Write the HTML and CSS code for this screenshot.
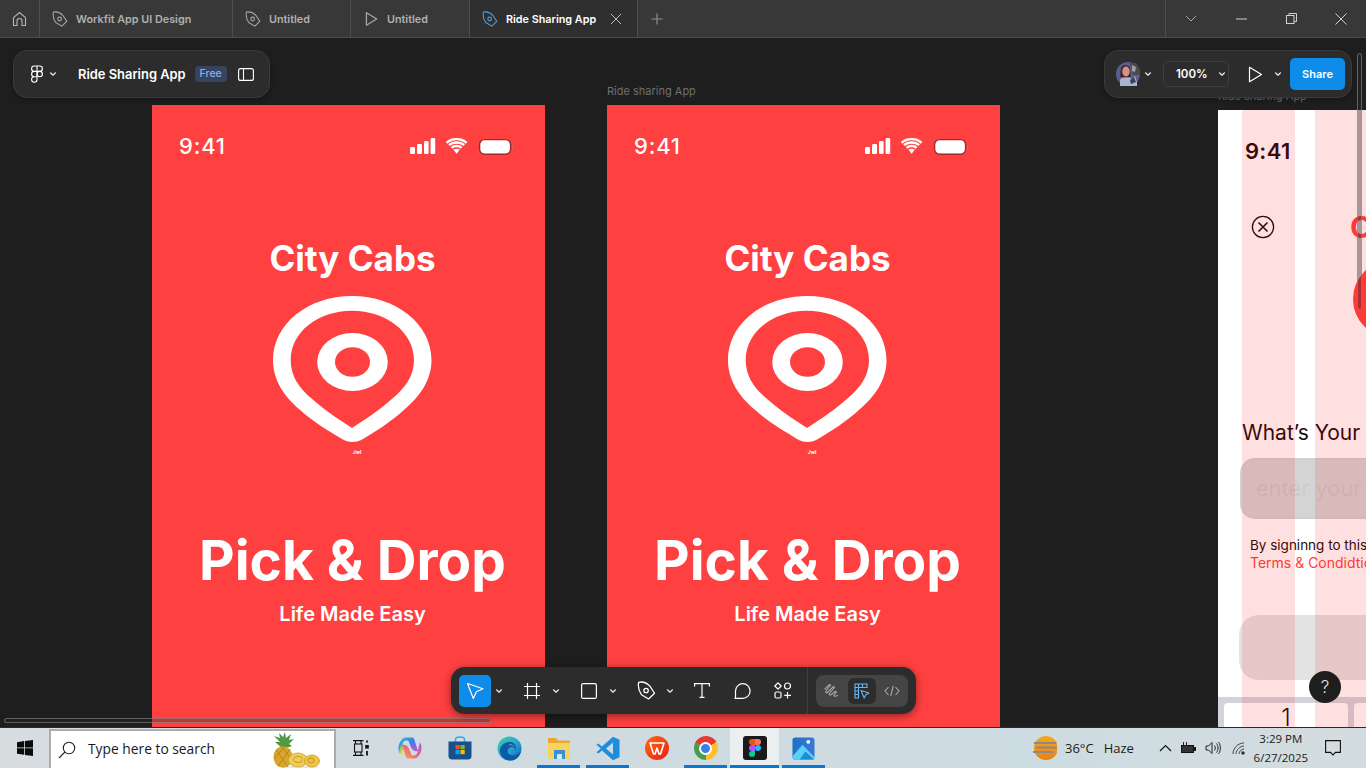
FILE: index.html
```html
<!DOCTYPE html>
<html lang="en">
<head>
<meta charset="utf-8">
<title>Ride Sharing App</title>
<link rel="stylesheet" href="styles.css">
</head>
<body>
<svg class="defs" width="0" height="0" aria-hidden="true">
  <defs>
    <symbol id="pen" viewBox="0 0 18 18"><path d="M1.600 1.200C5.500.4 9.500 2 12.200 4.800L16.600 11.600 11 17 4.200 13C2 9.800.8 5 1.600 1.200Z" fill="none" stroke="currentColor" stroke-width="1.200" stroke-linejoin="round"/><circle cx="8.600" cy="9" r="2.100" fill="none" stroke="currentColor" stroke-width="1.200"/></symbol>
    <symbol id="chev" viewBox="0 0 8 8"><path d="M1.500 2.800 4 5.200 6.500 2.800" fill="none" stroke="currentColor" stroke-width="1.200" stroke-linecap="round" stroke-linejoin="round"/></symbol>
    <symbol id="pin" viewBox="0 0 159 148"><path fill="#fff" fill-rule="evenodd" d="M79 0C35 0 0 28 0 64C0 85 12 101 26 113C40 126 56 135 69 143C75 147 84 147 90 143C103 135 118 126 132 113C146 101 158.500 85 158.500 64C158.500 28 123 0 79 0ZM79 14.700C45 14.700 17.700 36 17.700 64C17.700 80 26 92 38 102C50 113 65 123 79 132C93 123 108 113 120 102C132 92 141 80 141 64C141 36 113 14.700 79 14.700Z"/><ellipse cx="79.500" cy="66" rx="35.300" ry="29" fill="#fff"/><ellipse cx="79.500" cy="66" rx="17.500" ry="14.700" fill="#ff4040"/></symbol>
    <symbol id="status" viewBox="0 0 104 17"><rect x="0" y="9" width="5" height="7" rx="1.200" fill="#fff"/><rect x="7" y="6" width="5" height="10" rx="1.200" fill="#fff"/><rect x="14" y="3" width="4.600" height="13" rx="1.200" fill="#fff"/><rect x="20.600" y="0" width="4.600" height="16" rx="1.200" fill="#fff"/><path d="M37.400 5.400C42.600.7 50.600.7 55.800 5.400L57.200 4C51.200-1.400 42-1.400 36 4Z" fill="#fff" stroke="#fff" stroke-width=".5"/><path d="M40 8.100C43.700 4.900 49.500 4.900 53.200 8.100L55 6.300C50.200 2.100 43 2.100 38.200 6.300Z" fill="#fff"/><path d="M42.600 10.700C44.900 8.900 48.300 8.900 50.600 10.700L52.400 8.900C49 6.100 44.200 6.100 40.800 8.900Z" fill="#fff"/><path d="M46.600 15.800 49.800 11.600C47.900 10.400 45.300 10.400 43.400 11.600Z" fill="#fff"/><rect x="69.600" y="1.600" width="31" height="14.600" rx="5" fill="#fff" stroke="#a2282c" stroke-width="1.400"/><rect x="102" y="6.500" width="1.400" height="5" rx=".6" fill="#d86060"/></symbol>
  </defs>
</svg>

<header class="tabbar">
  <div class="tab home"><svg width="15" height="16" viewBox="0 0 15 16" fill="none" stroke="#b4b4b4" stroke-width="1.100"><path d="M1.500 6.700 7.500 1.500 13.500 6.700V14.500H10V9.800C10 8.300 9 7.500 7.500 7.500S5 8.300 5 9.800V14.500H1.500Z" stroke-linejoin="round"/></svg></div>
  <div class="tab w1"><svg class="tab-ico"><use href="#pen"/></svg><span>Workfit App UI Design</span></div>
  <div class="tab w2"><svg class="tab-ico"><use href="#pen"/></svg><span>Untitled</span></div>
  <div class="tab w3"><svg class="tab-ico" viewBox="0 0 14 14"><path d="M3 1.500 12 7 3 12.500Z" fill="none" stroke="currentColor" stroke-width="1.100" stroke-linejoin="round"/></svg><span>Untitled</span></div>
  <div class="tab w4 active"><svg class="tab-ico"><use href="#pen"/></svg><span>Ride Sharing App</span><svg class="tab-x" width="12" height="12" viewBox="0 0 12 12"><path d="M1 1 11 11M11 1 1 11" stroke="#bdbdbd" stroke-width="1"/></svg></div>
  <div class="tab plus"><svg width="12" height="12" viewBox="0 0 12 12"><path d="M6 .5V11.500M.5 6H11.500" stroke="#8f8f8f" stroke-width="1.200"/></svg></div>
  <div class="tab-fill"></div>
  <div class="winctl">
    <span class="wc"><svg width="12" height="7" viewBox="0 0 12 7"><path d="M1 1 6 6 11 1" fill="none" stroke="#a8a8a8"/></svg></span>
    <span class="wc"><svg width="11" height="2" viewBox="0 0 11 2"><path d="M0 1H11" stroke="#d0d0d0" stroke-width="1"/></svg></span>
    <span class="wc"><svg width="11" height="11" viewBox="0 0 11 11" fill="none" stroke="#d0d0d0"><rect x=".5" y="2.500" width="7.500" height="8"/><path d="M3 2.500V.5H10.500V8.500H8"/></svg></span>
    <span class="wc"><svg width="12" height="12" viewBox="0 0 12 12"><path d="M.5.5 11.500 11.500M11.500.5 .5 11.500" stroke="#d0d0d0"/></svg></span>
  </div>
</header>

<main class="canvas">
  <div class="frame-label lab-a">Ride sharing App</div>
  <div class="frame-label lab-b">Ride sharing App</div>

  <section class="phone red pos-a">
    <div class="status"><span class="time">9:41</span><svg class="status-ico"><use href="#status"/></svg></div>
    <h1 class="brand">City Cabs</h1>
    <svg class="pin"><use href="#pin"/></svg>
    <div class="tiny">Jwl</div>
    <div class="headline">Pick &amp; Drop</div>
    <div class="tagline">Life Made Easy</div>
  </section>

  <section class="phone red pos-b">
    <div class="status"><span class="time">9:41</span><svg class="status-ico"><use href="#status"/></svg></div>
    <h1 class="brand">City Cabs</h1>
    <svg class="pin"><use href="#pin"/></svg>
    <div class="tiny">Jwl</div>
    <div class="headline">Pick &amp; Drop</div>
    <div class="tagline">Life Made Easy</div>
  </section>

  <section class="phone sign pos-c">
    <div class="s-time">9:41</div>
    <div class="s-row">
      <svg class="s-close" width="24" height="24" viewBox="0 0 24 24" fill="none" stroke="#1c0b0b"><circle cx="12" cy="12" r="10.600" stroke-width="1.300"/><path d="M7.500 7.500 16.500 16.500M16.500 7.500 7.500 16.500" stroke-width="1.600"/></svg>
      <span class="s-brand">City Cabs</span>
    </div>
    <div class="s-logo"></div>
    <div class="s-q">What’s Your Name?</div>
    <div class="s-input">enter your name</div>
    <div class="s-terms">By signinng to this app you agree to our<br><span class="s-link">Terms &amp; Condidtions</span></div>
    <div class="s-btn"></div>
    <div class="s-keys"><div class="s-key">1</div><div class="s-key">2</div></div>
  </section>

  <div class="hscroll"></div>
  <div class="vscroll"></div>

  <div class="panel panel-left">
    <svg class="fig-mark" width="12" height="18" viewBox="0 0 12 18" fill="none" stroke="#fff" stroke-width="1.100"><path d="M6 1H3.300a2.700 2.700 0 0 0 0 5.400H6ZM6 1H8.700a2.700 2.700 0 0 1 0 5.400H6ZM6 6.400H3.300a2.700 2.700 0 0 0 0 5.400H6ZM6 11.800H3.300A2.700 2.700 0 1 0 6 14.500Z"/><circle cx="8.700" cy="9.100" r="2.700"/></svg>
    <svg class="chev c-logo"><use href="#chev"/></svg>
    <span class="file-name">Ride Sharing App</span>
    <span class="free">Free</span>
    <svg class="side-ico" width="16" height="13" viewBox="0 0 16 13" fill="none" stroke="#fff" stroke-width="1.100"><rect x=".6" y=".6" width="14.800" height="11.800" rx="2"/><path d="M5.500.6V12.400"/></svg>
  </div>

  <div class="panel panel-right">
    <svg class="avatar" width="24" height="24" viewBox="0 0 24 24"><circle cx="12" cy="12" r="12" fill="#55618a"/><path d="M14 1H20L24 8V13H17Z" fill="#4a4a4c"/><path d="M16 3 20 5 19 10 16 9Z" fill="#a0a0a2"/><path d="M5 6C6 2 13 2 14 6L15 15H4Z" fill="#4c2428"/><ellipse cx="10" cy="9.500" rx="3.700" ry="5" fill="#cf9488"/><path d="M4 24V18C5 15 14 15 16 17L19 14 21 20V24Z" fill="#a9b4d0"/><path d="M14 18 18 15 20 20 15 22Z" fill="#3b4260"/></svg>
    <svg class="chev c-av"><use href="#chev"/></svg>
    <div class="zoom-box"><span>100%</span><svg class="chev"><use href="#chev"/></svg></div>
    <svg class="play" width="15" height="17" viewBox="0 0 15 17"><path d="M1.500 1.300 13.500 8.500 1.500 15.700Z" fill="none" stroke="#fff" stroke-width="1.200" stroke-linejoin="round"/></svg>
    <svg class="chev c-play"><use href="#chev"/></svg>
    <div class="share">Share</div>
  </div>

  <div class="tools">
    <div class="tool select"><svg width="20" height="20" viewBox="0 0 20 20"><path d="M2.500 2.500 18 7.800 11.400 10.700 8.300 17.500Z" fill="none" stroke="#fff" stroke-width="1.200" stroke-linejoin="round"/></svg></div>
    <svg class="chev tc"><use href="#chev"/></svg>
    <div class="tool t-frame"><svg width="16" height="16" viewBox="0 0 16 16"><path d="M3.500 0V16M12.500 0V16M0 3.500H16M0 12.500H16" stroke="#fff" stroke-width="1.200"/></svg></div>
    <svg class="chev tc"><use href="#chev"/></svg>
    <div class="tool t-rect"><svg width="16" height="16" viewBox="0 0 16 16"><rect x=".6" y=".6" width="14.800" height="14.800" rx="1.500" fill="none" stroke="#fff" stroke-width="1.200"/></svg></div>
    <svg class="chev tc"><use href="#chev"/></svg>
    <div class="tool t-pen"><svg class="white-ico" width="19" height="19"><use href="#pen"/></svg></div>
    <svg class="chev tc"><use href="#chev"/></svg>
    <div class="tool t-text"><svg width="16" height="15" viewBox="0 0 16 15"><path d="M.6 3.500V.6H15.400V3.500M8 .6V14.400M5.500 14.400H10.500" fill="none" stroke="#fff" stroke-width="1.200"/></svg></div>
    <div class="tool t-bub"><svg width="17" height="16" viewBox="0 0 17 16"><path d="M8.800.7A7.300 7.300 0 0 1 8.800 15.300H1.200C1.800 13.800 1.500 12.800 1.500 8A7.300 7.300 0 0 1 8.800.7Z" fill="none" stroke="#fff" stroke-width="1.200"/></svg></div>
    <div class="tool t-comp"><svg width="18" height="17" viewBox="0 0 18 17" fill="none" stroke="#fff" stroke-width="1.200"><path d="M4 .8 7.200 4 4 7.200 .8 4Z" stroke-linejoin="round"/><circle cx="13.500" cy="4" r="3"/><rect x="1" y="10" width="6" height="6" rx="1.500"/><path d="M13.500 10V16.500M10.200 13.300H17"/></svg></div>
    <div class="tool-sep"></div>
    <div class="modes">
      <div class="mode"><svg width="15" height="15" viewBox="0 0 15 15" fill="none" stroke="#a8a8a8" stroke-width="1.100" stroke-linecap="round"><path d="M1 6 5 2C6 1 7 2 6 3L2 8C1 9.500 2.500 10.500 3.500 9.500L9 4C10 3 11 4 10 5L5.500 10.500C4.700 11.500 6 12.500 7 11.700L11 8.500C12 7.800 12.800 8.800 12 9.700L10 12C9.300 13 10.500 14 13.500 12.500"/></svg></div>
      <div class="mode on"><svg width="16" height="16" viewBox="0 0 16 16" fill="none" stroke="#6db4f2" stroke-width="1.100"><path d="M1 1H13V4.500H4.500V15H1ZM1 4.500H4.500M1 8H4.500M1 11.500H4.500M4.500 1V4.500M8.500 1V4.500"/><path d="M7 7.500 15 10 11.800 11.800 10.200 15Z" stroke-linejoin="round"/></svg></div>
      <div class="mode"><svg width="16" height="12" viewBox="0 0 16 12" fill="none" stroke="#a8a8a8" stroke-width="1.100"><path d="M4.500 2 1 6 4.500 10M11.500 2 15 6 11.500 10M9.200 1 6.800 11"/></svg></div>
    </div>
  </div>

  <div class="help">?</div>
</main>

<footer class="taskbar">
  <div class="start"><svg width="16" height="16" viewBox="0 0 16 16" fill="#0b0b0b"><path d="M0 2.200 7.200 1.100V7.400H0ZM8 1 16 0V7.400H8ZM0 8.200H7.200V14.700L0 13.700ZM8 8.200H16V16L8 14.900Z"/></svg></div>
  <div class="search">
    <svg class="search-ico" width="18" height="18" viewBox="0 0 18 18" fill="none" stroke="#222" stroke-width="1.100"><circle cx="11" cy="7" r="5.700"/><path d="M7 11 1 17"/></svg>
    <span class="search-text">Type here to search</span>
    <svg class="pine" width="50" height="36" viewBox="0 0 50 36"><ellipse cx="30" cy="35" rx="19" ry="1.200" fill="#e8e8e0"/><path d="M11 16 4 10 9 10 3 4 9 6 8 1 12 5 14 0 15 6 20 2 18 8 23 7 18 12 21 14 15 16Z" fill="#4f9a45"/><ellipse cx="12" cy="25" rx="9.500" ry="10.800" fill="#d8a62c"/><path d="M5 18 17 35M10 14 21 28M19 17 7 34M14 14 3 27" stroke="#a9801f" stroke-width=".8"/><ellipse cx="27" cy="28" rx="9.500" ry="7" fill="#f0cd55" stroke="#cfa032" stroke-width=".8"/><ellipse cx="27" cy="27.500" rx="4.500" ry="3" fill="none" stroke="#c89a2c"/><ellipse cx="41" cy="29" rx="7.500" ry="6" fill="#eec346" stroke="#c99a2c" stroke-width=".8"/><ellipse cx="40" cy="28.500" rx="3" ry="2.500" fill="none" stroke="#c08f28"/></svg>
  </div>
  <div class="app"><svg width="16" height="16" viewBox="0 0 16 16" fill="none" stroke="#111" stroke-width="1.100"><path d="M0 .6H10.500M0 15.400H10.500"/><rect x="1.500" y="4" width="7.500" height="8"/><path d="M2.500 .6V4M8 .6V4M2.500 12V15.400M8 12V15.400"/><path d="M14 .5V2.500M14 11V15.500" stroke-width="1.800"/><rect x="12.200" y="5" width="3.600" height="3.600" fill="#111" stroke="none"/></svg></div>
  <div class="app"><svg width="24" height="22" viewBox="0 0 24 22"><defs><linearGradient id="cp1" x1="0" y1="0" x2="1" y2="1"><stop offset="0" stop-color="#27c8d8"/><stop offset=".45" stop-color="#3f7fe8"/><stop offset="1" stop-color="#d84fd0"/></linearGradient><linearGradient id="cp2" x1="0" y1="1" x2="1" y2="0"><stop offset="0" stop-color="#f8b03a"/><stop offset=".5" stop-color="#f0607e"/><stop offset="1" stop-color="#9a5ff0"/></linearGradient><linearGradient id="cp3" x1="0" y1="0" x2="0" y2="1"><stop offset="0" stop-color="#4fd06a"/><stop offset="1" stop-color="#f0d040"/></linearGradient></defs><path d="M8 .5H14C15.500.5 16 1.500 16.500 3L20 14C16 15 13.500 12 12.500 9L11 5C10.500 3.800 9.800 3.500 8.500 3.500 6 3.500 5 5 4.500 7L3 13C2.500 15 2 17 1.500 16 .2 13.500 0 9 1.500 6 3 2.500 5.500.5 8 .5Z" fill="url(#cp1)"/><path d="M1.500 16C1 13 2.500 8 4.500 7 5.500 9 4 15 4 17 3 18 2 17.500 1.500 16Z" fill="url(#cp3)"/><path d="M16 21.500H10C8.500 21.500 8 20.500 7.500 19L4 8C8 7 10.500 10 11.500 13L13 17C13.500 18.200 14.200 18.500 15.500 18.500 18 18.500 19 17 19.500 15L21 9C21.500 7 22 5 22.500 6 23.800 8.500 24 13 22.500 16 21 19.500 18.500 21.500 16 21.500Z" fill="url(#cp2)"/></svg></div>
  <div class="app nudge"><svg width="24" height="24" viewBox="0 0 24 24"><path d="M7.500 7V3.500C7.500 1.500 8.500 1 12 1S16.500 1.500 16.500 3.500V7" fill="none" stroke="#35a7de" stroke-width="1.500"/><path d="M.5 5.500H23.500V20C23.500 22.500 22 23.500 20 23.500H4C2 23.500.5 22.500.5 20Z" fill="#17508c"/><rect x="7.500" y="9" width="4.200" height="4.200" fill="#f25022"/><rect x="12.500" y="9" width="4.200" height="4.200" fill="#7fba00"/><rect x="7.500" y="14" width="4.200" height="4.200" fill="#00a4ef"/><rect x="12.500" y="14" width="4.200" height="4.200" fill="#ffb900"/></svg></div>
  <div class="app nudge"><svg width="25" height="25" viewBox="0 0 25 25"><defs><linearGradient id="ed1" x1="0" y1="0" x2="1" y2="1"><stop offset="0" stop-color="#38d39f"/><stop offset=".5" stop-color="#2aa7d8"/><stop offset="1" stop-color="#0b5fb3"/></linearGradient></defs><circle cx="12.500" cy="12.500" r="12" fill="url(#ed1)"/><path d="M24 15C21 20 13 21 11 17 9.500 14 12 11 15 11 17 11 18 12 18 14 20 12 19 7 14 6 7 5 2 11 3 16 4 22 11 26 17 24 21 22.500 23 19 24 15Z" fill="#0c59a4"/><path d="M9 11C12 8 16 8.500 18 11 17 9 14 8 12 9 10 10 9 11 9 11Z" fill="#bdeed0"/></svg></div>
  <div class="app run"><svg width="24" height="23" viewBox="0 0 24 23"><path d="M1 1H9L11 3.500H22C23 3.500 23 4 23 5V11H1Z" fill="#e8a92e"/><path d="M1 6H23V20C23 21.500 22 22 21 22H3C2 22 1 21.500 1 20Z" fill="#f8d35e"/><rect x="7" y="13" width="11" height="9" fill="#3a8fd6"/><rect x="10" y="17" width="5" height="5" fill="#cfe8fa"/></svg></div>
  <div class="app run"><svg width="24" height="25" viewBox="0 0 24 25"><path d="M17 .8 23.500 3.800V21.200L17 24.200 6 14.600 2.300 17.500.5 16.300 4.800 12.500.5 8.700 2.300 7.500 6 10.400ZM17 6.500 10 12.500 17 18.500Z" fill="#1a8ee0"/></svg></div>
  <div class="app"><div class="wps"><svg width="16" height="13" viewBox="0 0 16 13" fill="none" stroke="#fff" stroke-width="1.600" stroke-linejoin="round"><path d="M1 1H15L11.500 12H10L8 6 6 12H4.500Z"/></svg></div></div>
  <div class="app run"><div class="chrome"><span class="chrome-in"></span></div></div>
  <div class="app act"><div class="figbox"><svg width="12" height="18" viewBox="0 0 12 18"><path d="M6 0H3a3 3 0 0 0 0 6H6Z" fill="#f24e1e"/><path d="M6 0H9a3 3 0 0 1 0 6H6Z" fill="#ff7262"/><path d="M6 6H3a3 3 0 0 0 0 6H6Z" fill="#a259ff"/><circle cx="9" cy="9" r="3" fill="#1abcfe"/><path d="M6 12H3a3 3 0 1 0 3 3Z" fill="#0acf83"/></svg></div></div>
  <div class="app run"><svg width="23" height="23" viewBox="0 0 24 24"><defs><linearGradient id="ph" x1="0" y1="0" x2="1" y2="0"><stop offset="0" stop-color="#1f6fc4"/><stop offset="1" stop-color="#3a78d8"/></linearGradient></defs><rect x=".5" y=".5" width="23" height="23" rx="3" fill="url(#ph)"/><circle cx="17" cy="5" r="2" fill="#fff"/><path d="M.5 20 11 8 23.500 21V21C23.500 22.800 22.500 23.500 21 23.500H3C2 23.500.5 22.500.5 20Z" fill="#5bd0f5"/><path d="M8 23.500 14 15 23 23.500Z" fill="#1c8fd8"/></svg></div>

  <div class="tray">
    <svg class="wx" width="24" height="26" viewBox="0 0 24 26"><defs><linearGradient id="sun" x1="0" y1="0" x2="0" y2="1"><stop offset="0" stop-color="#f8a81c"/><stop offset="1" stop-color="#e8801a"/></linearGradient></defs><circle cx="13" cy="13" r="12" fill="url(#sun)"/><path d="M1 8H23M3 12.500H24M0 17H20" stroke="#8a8a8a" stroke-width="2"/></svg>
    <span class="wx-temp">36°C</span>
    <span class="wx-text">Haze</span>
    <svg class="t-caret" width="13" height="8" viewBox="0 0 13 8"><path d="M1 7 6.500 1.500 12 7" fill="none" stroke="#111" stroke-width="1.200"/></svg>
    <svg class="t-bat" width="17" height="12" viewBox="0 0 17 12"><rect x="2.500" y="3.500" width="12" height="7" fill="#333" stroke="#111"/><path d="M15 5.500H17V8.500H15ZM4.500 0V3M7.500 0V3" stroke="#222"/></svg>
    <svg class="t-vol" width="16" height="14" viewBox="0 0 16 14" fill="none" stroke="#222"><path d="M1 5H3.500L7 1.500V12.500L3.500 9H1Z"/><path d="M9.500 4.500C10.500 6 10.500 8 9.500 9.500M11.500 2.500C13.500 5 13.500 9 11.500 11.500M13.500 1C16 4.500 16 9.500 13.500 13"/></svg>
    <svg class="t-wifi" width="13" height="13" viewBox="0 0 13 13" fill="none" stroke="#444"><path d="M1 12C1 6 6 1 12 1M4 12C4 8 8 4 12 4M7 12C7 9.500 9.500 7 12 7"/><circle cx="11" cy="11" r="1.300" fill="#222"/></svg>
    <div class="clock"><div>3:29 PM</div><div>6/27/2025</div></div>
    <svg class="t-note" width="16" height="16" viewBox="0 0 16 16"><path d="M.6.6H15.400V12.400H10.500L8 15 5.500 12.400H.6Z" fill="none" stroke="#111" stroke-width="1.100"/></svg>
  </div>
</footer>
</body>
</html>
```
FILE: styles.css
```css
* { box-sizing: border-box; }
html, body { margin: 0; height: 100%; }
body {
  width: 1366px;
  height: 768px;
  overflow: hidden;
  display: flex;
  flex-direction: column;
  font-family: Inter, "Liberation Sans", sans-serif;
  background: #1e1e1e;
}
.defs { position: absolute; }

/* Tab bar */
.tabbar {
  flex: 0 0 38px;
  display: flex;
  background: #383838;
  border-bottom: 1px solid #4c4c4c;
  color: #b0b0b0;
  font-size: 10.8px;
  font-weight: 600;
}
.tab {
  display: flex;
  align-items: center;
  border-right: 1px solid #4f4f4f;
  padding-left: 12px;
}
.tab span { padding-top: 2px; }
.home { width: 40px; justify-content: center; padding: 0; }
.w1 { width: 193px; }
.w2 { width: 118px; }
.w3 { width: 119px; }
.w4 { width: 168px; }
.plus { width: 38px; border: 0; justify-content: flex-start; padding-left: 13px; }
.tab-ico { width: 16px; height: 16px; margin-right: 8px; flex: none; color: #a8a8a8; }
.active { background: #2f2f2f; color: #fff; }
.active .tab-ico { color: #4e9fe0; }
.tab-x { margin-left: 14px; }
.tab-fill { flex: 1; }
.winctl { width: 201px; display: flex; border-left: 1px solid #4f4f4f; }
.wc { width: 50px; display: flex; align-items: center; justify-content: center; }

/* Canvas */
.canvas { flex: 1 1 0; min-height: 0; position: relative; overflow: hidden; background: #1e1e1e; }
.frame-label { position: absolute; font-size: 11px; line-height: 14px; color: #6f6f6f; }
.lab-a { left: 607px; top: 46px; }
.lab-b { left: 1218px; top: 51px; }

.phone { position: absolute; display: flex; flex-direction: column; }
.pos-a { left: 152px; top: 67px; }
.pos-b { left: 607px; top: 67px; }
.pos-c { left: 1218px; top: 72px; }
.red {
  width: 393px;
  height: 640px;
  padding-left: 8px;
  background: #ff4040;
  color: #fff;
  align-items: center;
}
.status {
  width: 100%;
  height: 24px;
  margin-top: 29px;
  padding: 0 31px 0 19px;
  display: flex;
  align-items: center;
  justify-content: space-between;
}
.time { font-size: 22px; font-weight: 500; letter-spacing: .8px; }
.status-ico { width: 104px; height: 17px; }
.brand { margin: 78px 0 0; font-size: 35px; line-height: 44px; font-weight: 700; }
.pin { width: 159px; height: 148px; margin-top: 16px; flex: none; }
.tiny { font-size: 5px; line-height: 6px; font-weight: 700; margin-top: 5px; margin-left: 9px; }
.headline { margin-top: 69px; font-size: 55px; line-height: 72px; font-weight: 700; white-space: nowrap; }
.tagline { margin-top: 6px; font-size: 20px; line-height: 24px; font-weight: 600; }

/* Right, sign-in frame with layout grid stripes lying over it */
.sign {
  width: 393px;
  height: 640px;
  color: #1c0b0b;
  background: #fff;
}
.sign::after {
  content: "";
  position: absolute;
  inset: 0;
  background: linear-gradient(90deg, transparent 24px, rgba(255, 0, 0, .12) 24px, rgba(255, 0, 0, .12) 77px, transparent 77px, transparent 97px, rgba(255, 0, 0, .12) 97px);
}
.s-time { margin: 29px 0 0 27px; font-size: 22px; line-height: 24px; font-weight: 600; letter-spacing: .3px; }
.s-row { display: flex; align-items: center; margin: 52px 0 0 33px; height: 24px; }
.s-brand { margin-left: 75px; font-size: 30px; font-weight: 700; color: #ff4040; white-space: nowrap; }
.s-logo { width: 78px; height: 78px; margin: 21px 0 0 135px; border-radius: 50%; background: #ff4040; flex: none; }
.s-q { margin: 81px 0 0 24px; font-size: 21px; line-height: 28px; white-space: nowrap; }
.s-input {
  margin: 11px 0 0 22px;
  width: 349px;
  height: 61px;
  flex: none;
  padding-left: 14px;
  border-radius: 15px;
  border: 2px solid rgba(0, 0, 0, .02);
  background: rgba(0, 0, 0, .17);
  color: rgba(0, 0, 0, .06);
  font-size: 21.800px;
  line-height: 57px;
  white-space: nowrap;
}
.s-terms { margin: 17px 0 0 32px; font-size: 13.500px; line-height: 18px; white-space: nowrap; }
.s-link { color: #ff4040; font-size: 14px; }
.s-btn {
  margin: 43px 0 0 21px;
  width: 351px;
  height: 65px;
  flex: none;
  border-radius: 20px;
  background: rgba(0, 0, 0, .11);
}
.s-keys {
  margin-top: 17px;
  padding: 6px 6px 0;
  height: 60px;
  flex: none;
  display: flex;
  gap: 6px;
  background: #d1d5db;
}
.s-key {
  width: 124px;
  height: 50px;
  background: #fff;
  border-radius: 4px;
  text-align: center;
  font-size: 24px;
  font-weight: 300;
  line-height: 30px;
}

/* Scrollbars */
.hscroll {
  position: absolute;
  left: 4px;
  top: 680px;
  width: 487px;
  height: 5px;
  border-radius: 3px;
  background: rgba(40, 40, 40, .3);
  border: 1px solid rgba(150, 150, 150, .55);
}
.vscroll {
  position: absolute;
  left: 1357px;
  top: 15px;
  width: 5px;
  height: 257px;
  border-radius: 3px;
  background: rgba(40, 40, 40, .4);
  border: 1px solid rgba(150, 150, 150, .55);
}

/* Floating panels */
.panel {
  position: absolute;
  top: 12px;
  height: 48px;
  display: flex;
  align-items: center;
  background: #2c2c2c;
  border: 1px solid #3a3a3a;
  border-radius: 14px;
  color: #fff;
  box-shadow: 0 2px 5px rgba(0, 0, 0, .25);
}
.panel-left { left: 13px; width: 257px; padding-left: 17px; }
.panel-right { left: 1104px; width: 248px; padding-left: 11px; }
.chev { width: 8px; height: 8px; color: #e6e6e6; flex: none; }
.fig-mark { flex: none; }
.c-logo { margin-left: 6px; }
.file-name { margin-left: 21px; font-size: 12.900px; font-weight: 600; white-space: nowrap; }
.free {
  margin-left: 9px;
  width: 32px;
  height: 16px;
  border-radius: 4px;
  background: #394360;
  color: #7db7ee;
  font-size: 10.500px;
  font-weight: 500;
  line-height: 16px;
  text-align: center;
}
.side-ico { margin-left: 11px; }
.avatar { flex: none; }
.c-av { margin-left: 4px; }
.zoom-box {
  margin-left: 11px;
  width: 66px;
  height: 26px;
  border: 1px solid #3f3f3f;
  border-radius: 5px;
  display: flex;
  align-items: center;
  padding-left: 12px;
  font-size: 11.500px;
  font-weight: 600;
}
.zoom-box .chev { margin-left: 10px; }
.play { margin-left: 19px; flex: none; }
.c-play { margin-left: 11px; }
.share {
  margin-left: 8px;
  width: 55px;
  height: 32px;
  border-radius: 5px;
  background: #0d8ce9;
  font-size: 11px;
  font-weight: 600;
  line-height: 32px;
  text-align: center;
}

/* Bottom toolbar */
.tools {
  position: absolute;
  left: 451px;
  top: 629px;
  width: 465px;
  height: 47px;
  display: flex;
  align-items: center;
  padding-left: 8px;
  background: #2c2c2c;
  border-radius: 14px;
  box-shadow: 0 2px 8px rgba(0, 0, 0, .45);
}
.tool { width: 32px; height: 32px; display: flex; align-items: center; justify-content: center; flex: none; border-radius: 5px; }
.select { background: #0d8ce9; }
.tc { margin-left: 4px; }
.t-frame { margin-left: 13px; }
.t-rect { margin-left: 13px; }
.t-pen { margin-left: 13px; }
.white-ico { color: #fff; }
.t-text { margin-left: 12px; }
.t-bub { margin-left: 8px; }
.t-comp { margin-left: 9px; }
.tool-sep { width: 1px; height: 47px; background: #3d3d3d; margin-left: 8px; flex: none; }
.modes {
  margin-left: 8px;
  width: 92px;
  height: 32px;
  display: flex;
  align-items: center;
  justify-content: space-between;
  padding: 0 2px 0 1px;
  border-radius: 8px;
  background: #454545;
}
.mode { width: 28px; height: 26px; border-radius: 6px; display: flex; align-items: center; justify-content: center; }
.mode.on { background: #2c2c2c; }

.help {
  position: absolute;
  left: 1309px;
  top: 633px;
  width: 32px;
  height: 32px;
  border-radius: 50%;
  background: #1e1e1e;
  color: #e6e6e6;
  font-size: 17px;
  font-weight: 300;
  line-height: 32px;
  text-align: center;
}

/* Windows taskbar */
.taskbar {
  flex: none;
  height: 41px;
  overflow: hidden;
  display: flex;
  background: linear-gradient(90deg, #d7dcdf 0%, #cfdbe0 45%, #cddce2 75%, #d4dcdf 100%);
  border-top: 1px solid #2a2a2a;
  font-family: "Open Sans", "Noto Sans", sans-serif;
  color: #1a1a1a;
}
.start { width: 49px; display: flex; align-items: center; justify-content: center; }
.search {
  width: 287px;
  margin-top: 1px;
  display: flex;
  align-items: center;
  padding: 0 13px 0 7px;
  background: #fff;
  border: 2px solid #acacac;
  border-bottom: 0;
}
.search-ico { flex: none; }
.search-text { margin: 0 0 2px 12px; font-size: 13.800px; white-space: nowrap; }
.pine { margin-left: auto; flex: none; }
.app {
  width: 49px;
  display: flex;
  align-items: center;
  justify-content: center;
  flex: none;
  border-bottom: 3px solid transparent;
  padding-top: 3px;
}
.nudge { margin-left: 1px; }
.run { border-image: linear-gradient(90deg, transparent 8%, #0a78d0 8%, #0a78d0 92%, transparent 92%) 1; }
.act { background: #ebeff0; border-bottom-color: #0a78d0; }
.wps {
  width: 24px;
  height: 24px;
  border-radius: 50%;
  background: linear-gradient(135deg, #ff6a10, #e8201c);
  display: flex;
  align-items: center;
  justify-content: center;
}
.chrome {
  width: 24px;
  height: 24px;
  border-radius: 50%;
  background: conic-gradient(from -60deg, #e53935 0 33.300%, #fbc02d 33.300% 66.600%, #43a047 66.600% 100%);
  display: flex;
  align-items: center;
  justify-content: center;
}
.chrome-in { width: 13px; height: 13px; border-radius: 50%; background: #3a7fe6; border: 2px solid #fff; }
.figbox { width: 24px; height: 24px; border-radius: 3px; background: #1a1a1a; display: flex; align-items: center; justify-content: center; }
.tray { margin-left: auto; display: flex; align-items: center; font-size: 13px; width: 335px; flex: none; }
.wx { margin-left: 2px; flex: none; }
.wx-temp { margin-left: 8px; font-size: 13px; }
.wx-text { margin-left: 10px; font-size: 13px; }
.t-caret { margin-left: 25px; flex: none; }
.t-bat { margin-left: 7px; flex: none; }
.t-vol { margin-left: 9px; flex: none; }
.t-wifi { margin-left: 11px; flex: none; }
.clock { margin-left: 6px; width: 60px; font-size: 11.500px; line-height: 19px; text-align: center; white-space: nowrap; }
.t-note { margin-left: 14px; flex: none; }
```
